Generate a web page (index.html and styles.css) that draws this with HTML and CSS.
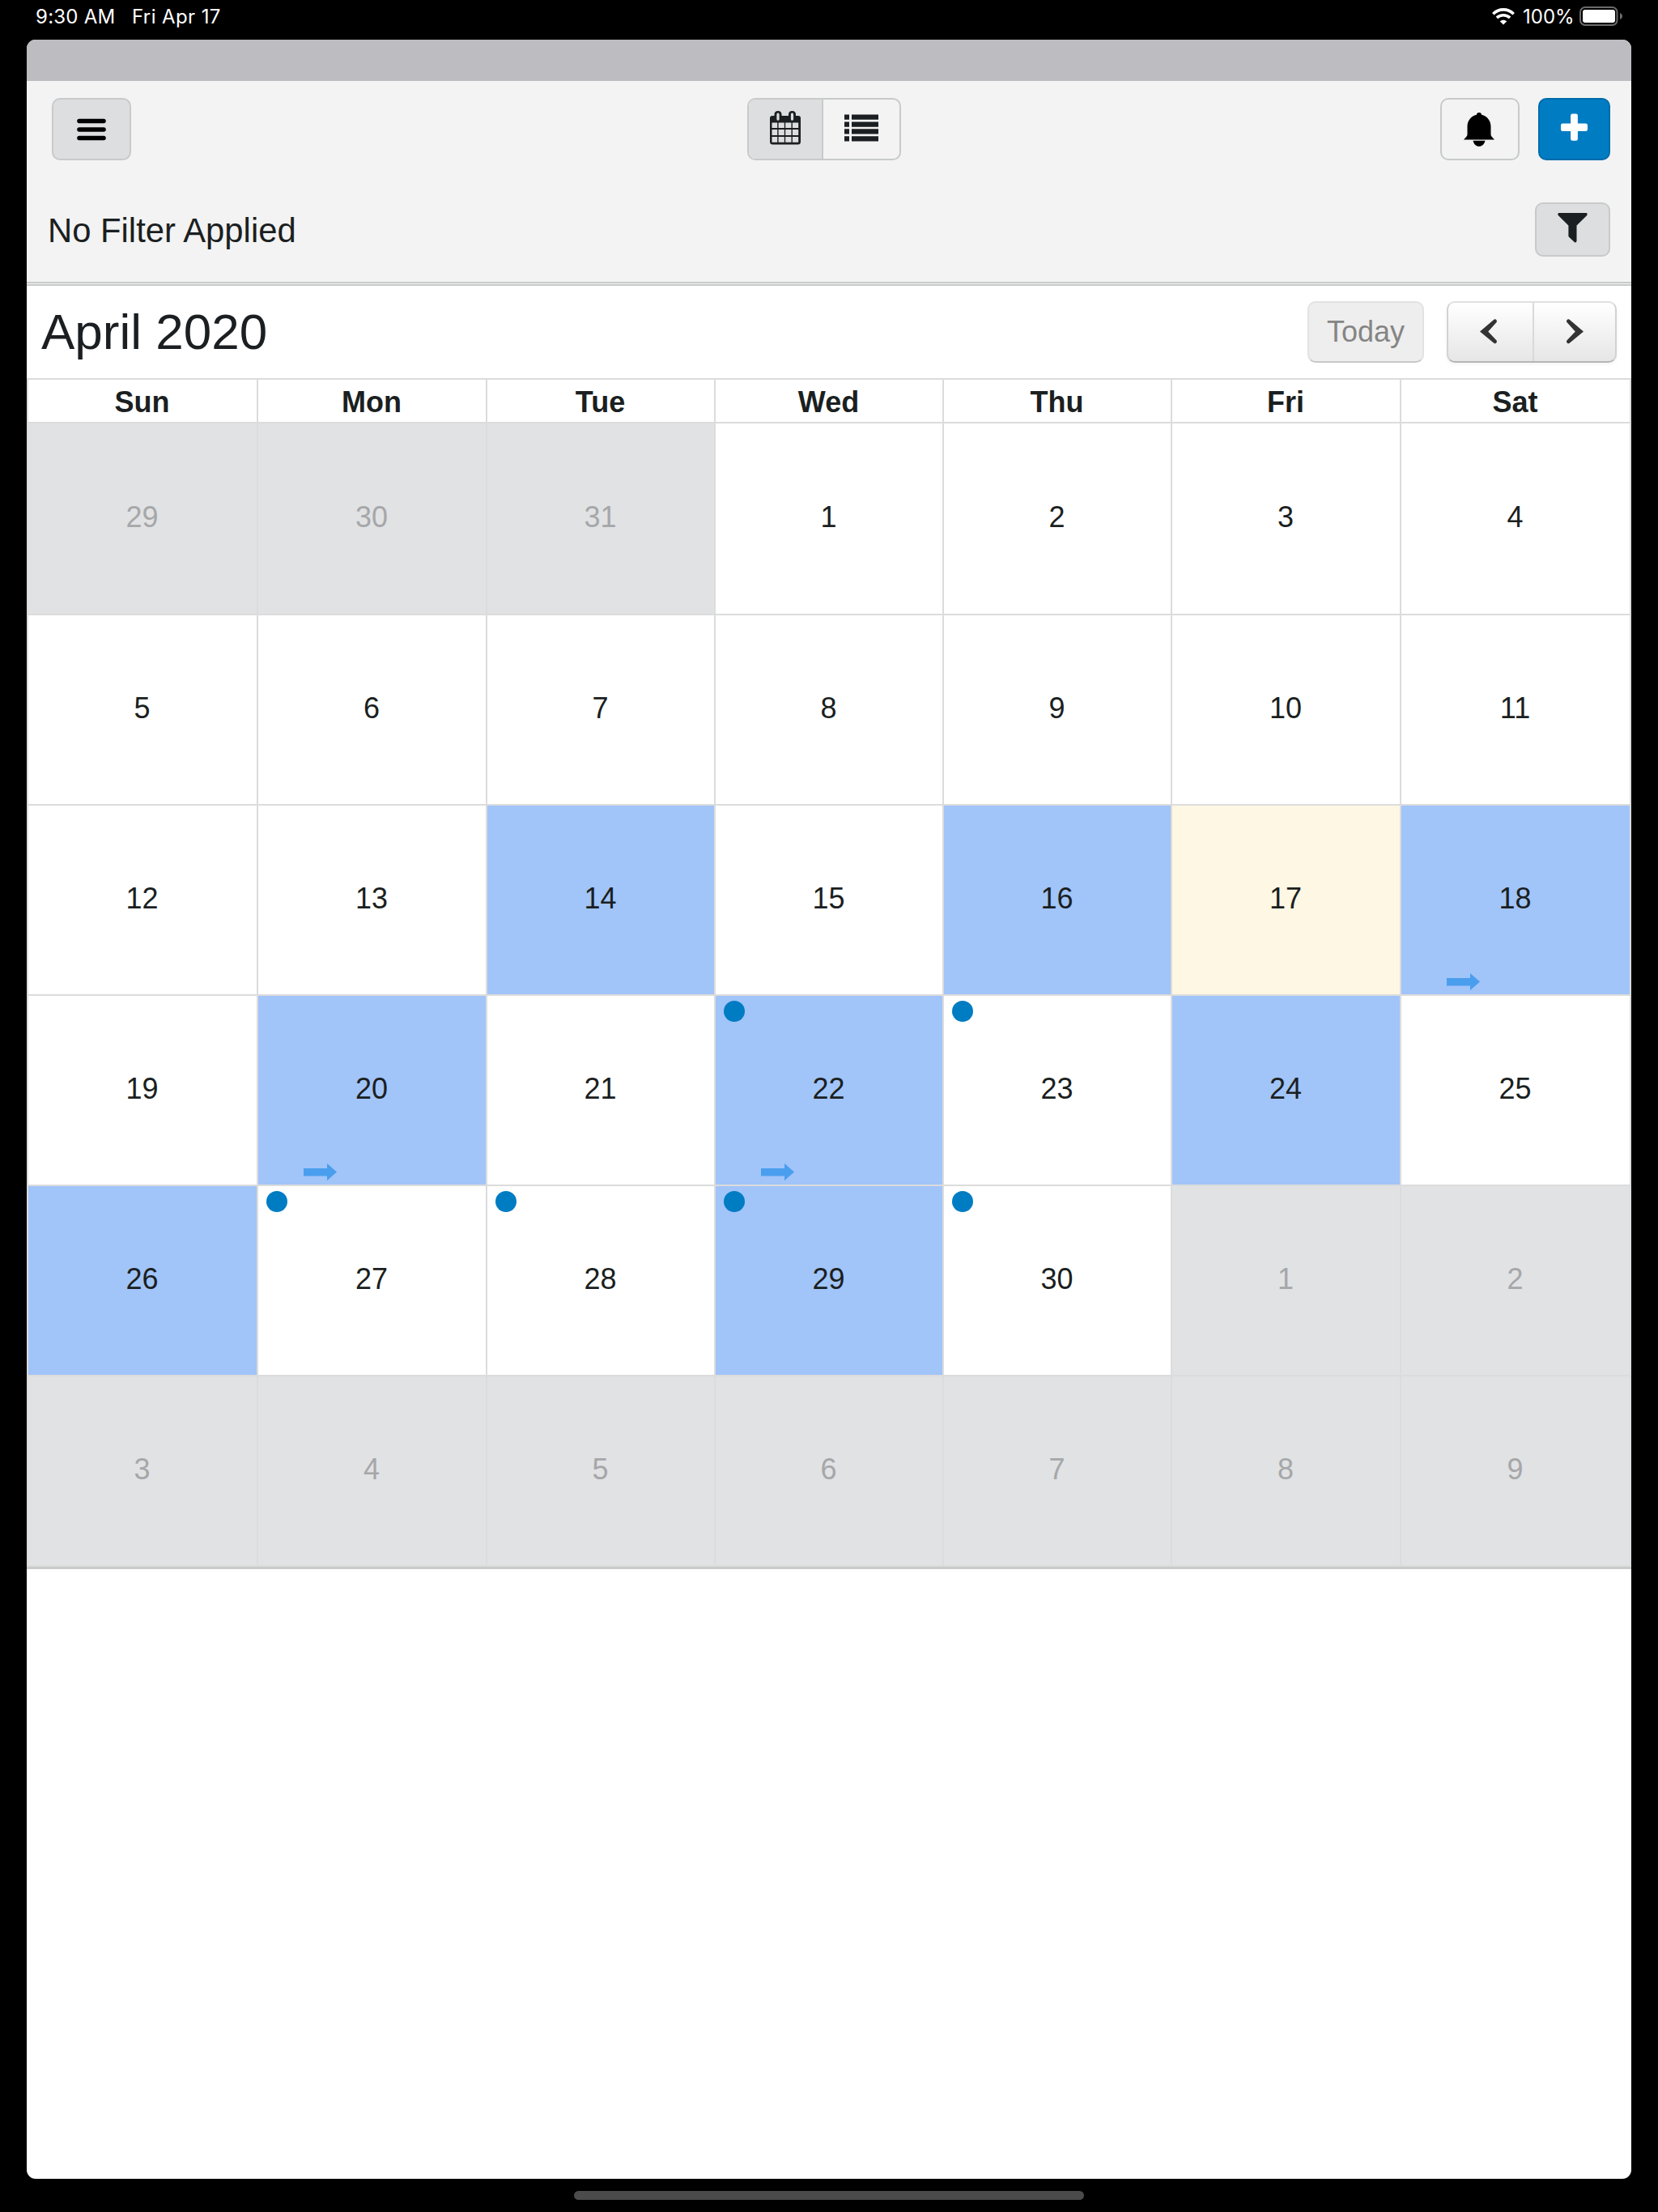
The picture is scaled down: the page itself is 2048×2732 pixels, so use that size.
FILE: index.html
```
<!DOCTYPE html>
<html lang="en">
<head>
<meta charset="utf-8">
<title>Calendar</title>
<link rel="stylesheet" href="styles.css">
</head>
<body>
<div class="status">
  <span class="time">9:30 AM</span><span class="date">Fri Apr 17</span>
  <svg class="wifi" width="28" height="21" viewBox="0 0 28 21"><g fill="none" stroke="#fff" stroke-width="3.6"><path d="M1.3 7.2C8.4.1 19.6.1 26.700 7.200"/><path d="M5.900 11.900C10.500 7.600 17.500 7.600 22.100 11.900"/></g><path d="M14 20.500l-4.300-4.300c2.400-2.100 6.200-2.100 8.600 0z" fill="#fff"/></svg>
  <span class="percent">100%</span>
  <svg class="battery" width="54" height="24" viewBox="0 0 54 24"><rect x="1" y="1" width="45.500" height="22" rx="6" fill="none" stroke="#6b6b6b" stroke-width="2"/><rect x="4" y="4" width="40" height="16" rx="3" fill="#fff"/><path d="M50 8c4 1.500 4 6.500 0 8z" fill="#6b6b6b"/></svg>
</div>
<div class="app">
  <div class="band"></div>
  <header class="header">
    <div class="toolbar">
      <div class="side"><button class="btn menu"><svg width="36" height="28" viewBox="0 0 36 28"><path d="M3 3.500h30M3 14h30M3 24.500h30" stroke="#000" stroke-width="5.600" stroke-linecap="round"/></svg></button></div>
      <div class="segment">
        <button class="seg active"><svg width="40" height="42" viewBox="0 0 40 42"><path fill="#1b1f21" fill-rule="evenodd" d="M4 6h2.500V4.500Q6.500 0 11 0t4.500 4.500V6H24V4.500Q24 0 28.500 0T33 4.500V6h3q3 0 3 3v29q0 3.500-3.500 3.500h-31Q1 41.500 1 38V9q0-3 3-3zM3.500 14.500v6.600h6.700v-6.600zM11.600 14.500v6.600h7.200v-6.600zM20.200 14.500v6.600h7.300v-6.600zM28.900 14.500v6.600h7.300v-6.600zM3.500 22.900v7.200h6.700v-7.200zM11.600 22.900v7.200h7.200v-7.200zM20.200 22.900v7.200h7.300v-7.200zM28.900 22.900v7.200h7.300v-7.200zM3.500 31.900v6.800h6.700v-6.800zM11.600 31.900v6.800h7.200v-6.800zM20.200 31.900v6.800h7.300v-6.800zM28.900 31.900v6.800h7.300v-6.800z"/><path d="M11 4.200v6M28.500 4.200v6" stroke="#dddee0" stroke-width="3.200" stroke-linecap="round"/></svg></button>
        <button class="seg"><svg width="42" height="34" viewBox="0 0 42 34" fill="#1b1f21"><path d="M0 .5h6v6.200H0zM9 .5h33v6.200H9zM0 9.500h6v6.200H0zM9 9.500h33v6.200H9zM0 18.300h6v6.200H0zM9 18.300h33v6.200H9zM0 27.200h6v6.200H0zM9 27.200h33v6.200H9z"/></svg></button>
      </div>
      <div class="side right">
        <button class="btn bell"><svg width="40" height="42" viewBox="0 0 40 42"><path d="M17 2.700C17 1 18 0 20 0s3 1 3 2.700C30.500 4.500 34.500 10.500 34.500 17v10c0 2.500 2.500 4 4.500 6.500H1c2-2.500 4.500-4 4.500-6.500V17C5.500 10.500 9.500 4.500 17 2.700zM12.500 34.700h15c-1 4.500-4 7-7.500 7s-6.500-2.500-7.500-7z"/></svg></button>
        <button class="btn add"><svg width="33" height="34" viewBox="0 0 33 34"><path fill="#fff" d="M14.300.5h4.400q2.200 0 2.200 2.200v9.800h9.900q2.200 0 2.200 2.200v5q0 2.200-2.200 2.200h-9.900v9.600q0 2.200-2.200 2.200h-4.400q-2.200 0-2.200-2.200v-9.600H2.200Q0 21.900 0 19.700v-5q0-2.200 2.200-2.200h9.900V2.700q0-2.200 2.200-2.200z"/></svg></button>
      </div>
    </div>
    <div class="filterbar">
      <span class="filter-text">No Filter Applied</span>
      <button class="btn filter"><svg width="37" height="37" viewBox="0 0 37 37"><path fill="#1b1f21" d="M1.500 0h34q2 1 .7 3L23.500 15.600V35q-.5 2-2.500 1.200l-7-6.400q-.6-.6-.6-1.500V15.600L.8 3Q-.6 1 1.500 0z"/></svg></button>
    </div>
  </header>
  <div class="titlebar">
    <h1>April 2020</h1>
    <button class="today">Today</button>
    <div class="pager">
      <button><svg width="22" height="30" viewBox="0 0 22 30"><path fill="#333" d="M0 15.500L17 .9c2-1.600 5 .7 3.600 3.200L10.200 15.500l10.400 10.900c1.400 2.500-1.600 4.800-3.600 3.200z"/></svg></button>
      <button><svg width="22" height="30" viewBox="0 0 22 30"><path fill="#333" d="M22 15.500L5 .9C3 -.7 0 1.600 1.400 4.100L11.800 15.500 1.400 26.400C0 28.900 3 31.200 5 29.600z"/></svg></button>
    </div>
  </div>
  <div class="calendar" id="calendar"></div>
</div>
<div class="home"></div>
<script src="calendar.js"></script>
</body>
</html>
```
FILE: styles.css
```
* { box-sizing: border-box; }
body { margin: 0; height: 2732px; background: #000; display: flex; flex-direction: column; align-items: center; font-family: "Liberation Sans", Arial, sans-serif; color: #1b1f21; overflow: hidden; }
button { font: inherit; color: inherit; padding: 0; margin: 0; border: 0; background: none; display: flex; align-items: center; justify-content: center; }
svg { display: block; flex: none; overflow: visible; }
.status { width: 100%; height: 49px; flex: none; padding: 0 43px 9px 44px; display: flex; align-items: center; color: #fff; font: 24px Inter, sans-serif; letter-spacing: .25px; white-space: nowrap; }
.time { width: 119px; }
.date { letter-spacing: .4px; }
.percent { margin: 0 8px 0 10px; width: 62px; letter-spacing: 0; }
.wifi { margin-left: auto; }
.app { width: 1982px; height: 2642px; flex: none; background: #fff; border-radius: 11px; overflow: hidden; }
.band { height: 51px; background: #bdbcc1; }
.header { height: 253px; background: #f3f3f3; border-bottom: 5px double #c8caca; padding: 21px 26px 0 31px; }
.toolbar { display: flex; height: 77px; }
.side { flex: 1; display: flex; }
.right { justify-content: flex-end; gap: 23px; }
.btn { height: 77px; width: 98px; border: 2px solid #c8caca; border-radius: 10px; }
.menu, .filter { background: #dddee0; }
.menu svg { margin-top: 1px; }
.bell { padding-right: 3px; }
.add { width: 89px; background: #007cc3; border-color: #006cab; }
.add svg { margin-top: -5px; }
.segment { width: 190px; display: flex; border: 2px solid #c8caca; border-radius: 10px; overflow: hidden; margin-right: 17px; }
.seg { flex: 1; padding-bottom: 4px; }
.seg.active { flex: 0 0 92px; background: #dddee0; border-right: 2px solid #c8caca; }
.filterbar { display: flex; justify-content: space-between; align-items: center; margin-top: 52px; height: 67px; }
.filter-text { font-size: 41.800px; margin-left: -5px; padding-top: 3px; }
.filter { width: 93px; height: 67px; }
.filter svg { margin-top: -5px; }
.titlebar { height: 114px; display: flex; align-items: center; padding: 0 18px; }
h1 { margin: 0 auto 0 0; font-size: 62px; font-weight: 400; line-height: 72px; }
.today { width: 144px; height: 76px; font-size: 36px; color: #858585; background: #eee; border: 2px solid #e2e2e2; border-bottom-color: #c8c8c8; border-radius: 10px; margin-right: 28px; }
.pager { display: flex; width: 210px; height: 76px; border: 2px solid #dedede; border-color: #e0e0e0 #d2d2d2 #b5b5b5; border-radius: 10px; background: linear-gradient(#fff, #e6e6e6); box-shadow: 0 2px 4px #0000000d; }
.pager button { flex: 1; padding-bottom: 2px; }
.pager button:first-child { border-right: 2px solid #d9d9d9; padding-right: 3px; }
.calendar { display: grid; grid-template-columns: 282px 281px 280px 280px 280px 281px 282px; grid-template-rows: 52px 235px repeat(5, 233px); gap: 2px; background: #dcdcdc; padding: 2px; border-bottom: 3px solid #c9cbcb; }
.weekday { background: #fff; font-size: 36px; font-weight: 700; display: flex; align-items: center; justify-content: center; padding: 3px 1px 0 0; }
.day { position: relative; background: #fff; font-size: 36px; display: flex; align-items: center; justify-content: center; padding: 0 1px 3px 0; }
.outside { background: #e1e2e4; color: #a6a7a9; }
.busy { background: #a1c4f9; }
.current { background: #fef7e3; }
.dot { position: absolute; left: 10px; top: 5.500px; width: 26px; height: 26px; border-radius: 50%; background: #007cc3; }
.arrow { position: absolute; left: 56px; bottom: 5.500px; }
.home { width: 630px; height: 11px; flex: none; margin-top: 15px; border-radius: 6px; background: #4b4b4b; }
```
FILE: calendar.js
```
const calendar = document.getElementById('calendar');
const busy = [14, 16, 18, 20, 22, 24, 26, 29];
const dots = [22, 23, 27, 28, 29, 30];
const arrows = [18, 20, 22];
const arrowSvg = '<svg class="arrow" width="41" height="21" viewBox="0 0 41 21"><path fill="#4a9eee" d="M0 6h29V0l12 10.500L29 21v-5.500H0z"/></svg>';

for (const name of ['Sun', 'Mon', 'Tue', 'Wed', 'Thu', 'Fri', 'Sat']) {
  calendar.insertAdjacentHTML('beforeend', `<div class="weekday">${name}</div>`);
}
for (let i = 0; i < 42; i++) {
  const date = new Date(2020, 2, 29 + i);
  const day = date.getDate();
  const inMonth = date.getMonth() === 3;
  let classes = 'day';
  let marks = '';
  if (!inMonth) classes += ' outside';
  else {
    if (busy.includes(day)) classes += ' busy';
    if (day === 17) classes += ' current';
    if (dots.includes(day)) marks += '<i class="dot"></i>';
    if (arrows.includes(day)) marks += arrowSvg;
  }
  calendar.insertAdjacentHTML('beforeend', `<div class="${classes}">${day}${marks}</div>`);
}
```
